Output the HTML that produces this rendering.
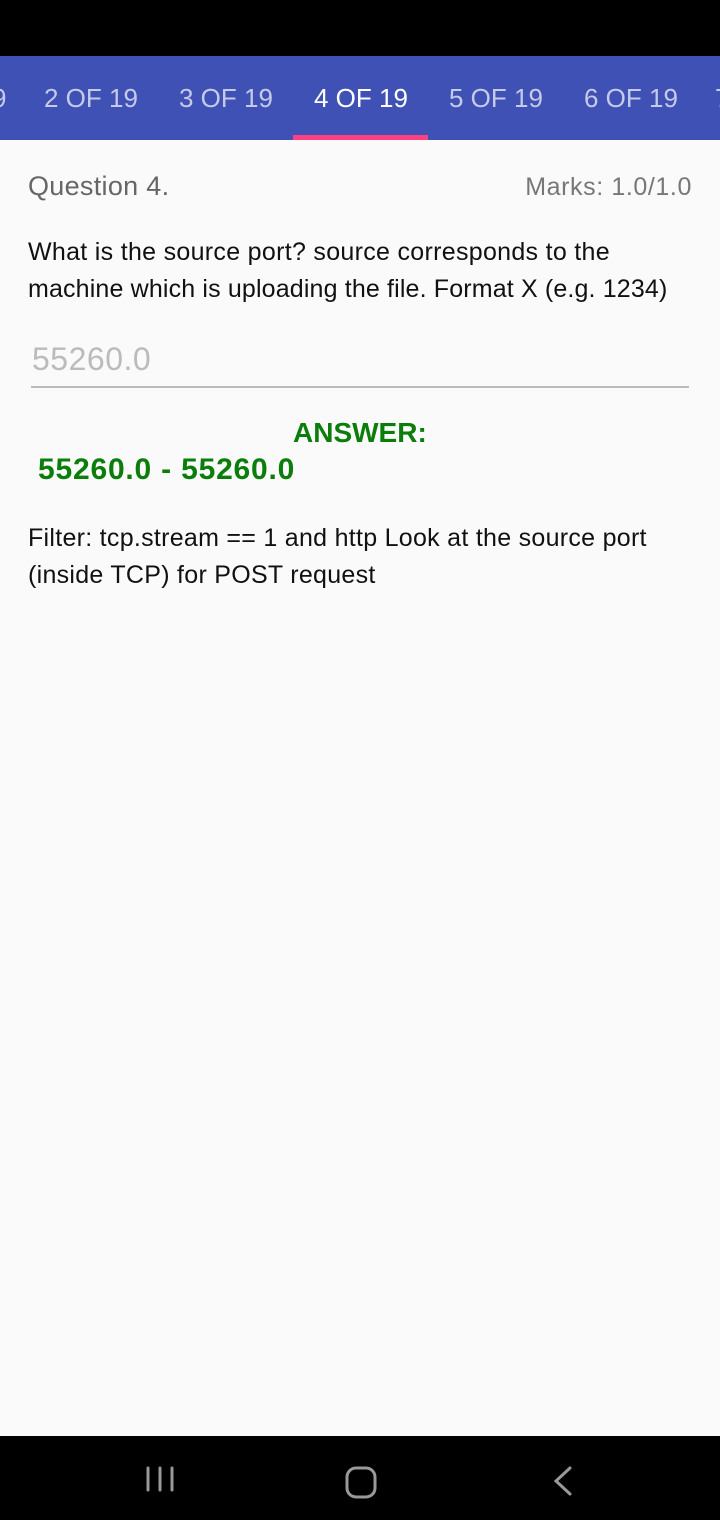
<!DOCTYPE html>
<html><head><meta charset="utf-8"><style>
body{margin:0;width:720px;height:1520px;background:#fafafa;font-family:"Liberation Sans",sans-serif;position:relative;overflow:hidden}
.sb{position:absolute;top:0;left:0;width:720px;height:56px;background:#000}
.tb{position:absolute;top:56px;left:0;width:720px;height:84px;background:#3f51b5}
.t{position:absolute;top:83px;font-size:26px;color:#c5cae9;font-weight:500;letter-spacing:0px}
.ind{position:absolute;left:293px;top:135px;width:135px;height:5px;background:#ff4081}
.a{position:absolute;font-size:26px;white-space:nowrap}
.nb{position:absolute;top:1436px;left:0;width:720px;height:84px;background:#000}
</style></head><body>
<div class="sb"></div>
<div class="tb"></div>
<div class="t" style="left:-8px">9</div>
<div class="t" style="left:44px">2 OF 19</div>
<div class="t" style="left:179px">3 OF 19</div>
<div class="t" style="left:314px;color:#fff">4 OF 19</div>
<div class="t" style="left:449px">5 OF 19</div>
<div class="t" style="left:584px">6 OF 19</div>
<div class="t" style="left:715px">7</div>
<div class="ind"></div>
<div class="a" style="left:28px;top:171px;color:#666;font-size:27px;letter-spacing:0.3px">Question 4.</div>
<div class="a" style="right:28px;top:173px;color:#777;font-size:25px;letter-spacing:0.6px">Marks: 1.0/1.0</div>
<div class="a" style="left:28px;top:234px;color:#111;font-size:25px;letter-spacing:0.3px;line-height:37px">What is the source port? source corresponds to the<br><span style="letter-spacing:0.15px">machine which is uploading the file. Format X (e.g. 1234)</span></div>
<div class="a" style="left:32px;top:341px;color:#bbb;font-size:32px;letter-spacing:0.5px">55260.0</div>
<div style="position:absolute;left:31px;top:386px;width:658px;height:2px;background:#bbb"></div>
<div class="a" style="left:293px;top:417px;color:#0a7d0a;font-weight:bold;font-size:28px">ANSWER:</div>
<div class="a" style="left:38px;top:453px;color:#0a7d0a;font-weight:bold;font-size:30px;letter-spacing:0.8px">55260.0 - 55260.0</div>
<div class="a" style="left:28px;top:520px;color:#111;font-size:25px;letter-spacing:0.28px;line-height:37px">Filter: tcp.stream == 1 and http Look at the source port<br>(inside TCP) for POST request</div>
<div class="nb">
<svg width="720" height="84" style="position:absolute;left:0;top:0">
<g stroke="#999" stroke-width="3" fill="none" stroke-linecap="round">
<path d="M148 32V54M160 32V54M172 32V54"/>
<rect x="347" y="32" width="28" height="29" rx="9"/>
<path d="M570 32L556 45L570 58"/>
</g></svg></div>
</body></html>
